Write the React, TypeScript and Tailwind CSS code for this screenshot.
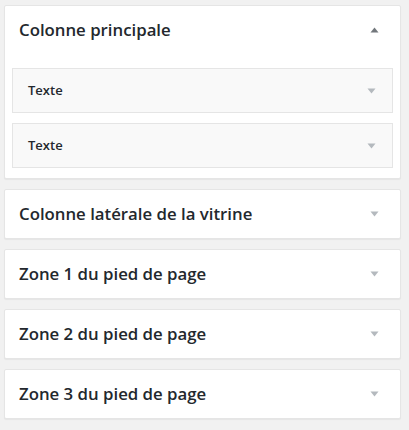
import { ReactNode } from 'react';

const font = { fontFamily: '"Open Sans", "Liberation Sans", sans-serif' };

function Arrow({ up = false, dark = false }: { up?: boolean; dark?: boolean }) {
  return (
    <svg width="9" height="6" viewBox="0 0 9 6" className="shrink-0">
      <path
        d={up ? 'M0.5 5.5 L4.5 0.5 L8.5 5.5 Z' : 'M0.5 0.5 L8.5 0.5 L4.5 5.5 Z'}
        fill={dark ? '#72777c' : '#b4b9be'}
      />
    </svg>
  );
}

function Section({ title, children, open = false }: { title: string; children?: ReactNode; open?: boolean }) {
  return (
    <div className="bg-white border border-[#e5e5e5] rounded-[2px] shadow-[0_1px_1px_rgba(0,0,0,0.05)]">
      <div className="h-[48px] flex items-center justify-between pl-[14px] pr-[21px]">
        <span className="text-[16.8px] font-semibold text-[#23282d]">{title}</span>
        <Arrow up={open} dark={open} />
      </div>
      {children}
    </div>
  );
}

function Widget({ title }: { title: string }) {
  return (
    <div className="h-[45px] bg-[#f9f9f9] border border-[#e5e5e5] flex items-center justify-between pl-[15px] pr-[16px]">
      <span className="text-[13px] font-semibold text-[#23282d]">{title}</span>
      <Arrow />
    </div>
  );
}

export default function App() {
  return (
    <div className="w-[409px] h-[430px] bg-[#f1f1f1] pt-[5px] pl-[4px] pr-[8px]" style={font}>
      <div className="flex flex-col gap-[10px]">
        <Section title="Colonne principale" open>
          <div className="flex flex-col gap-[10px] px-[7px] pt-[14px] pb-[10px]">
            <Widget title="Texte" />
            <Widget title="Texte" />
          </div>
        </Section>
        <Section title="Colonne latérale de la vitrine" />
        <Section title="Zone 1 du pied de page" />
        <Section title="Zone 2 du pied de page" />
        <Section title="Zone 3 du pied de page" />
      </div>
    </div>
  );
}
